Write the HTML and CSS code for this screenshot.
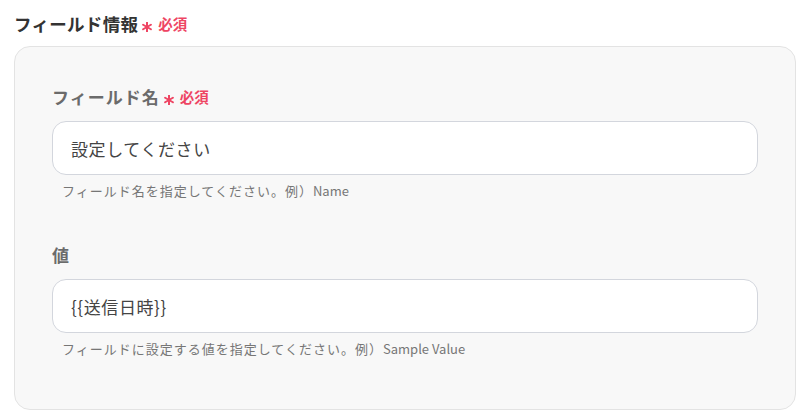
FILE: index.html
```html
<!DOCTYPE html>
<html lang="ja">
<head>
<meta charset="utf-8">
<title>フィールド情報</title>
<link rel="stylesheet" href="styles.css">
</head>
<body>
  <section class="group">
    <h2 class="group-title">フィールド情報<span class="req"><svg class="req-star" viewBox="0 0 10 10" width="10" height="10"><path d="M5 0.5V9.5M1.1 2.75L8.9 7.25M1.1 7.25L8.9 2.75"/></svg><span class="req-text">必須</span></span></h2>
    <div class="card">
      <div class="field">
        <label class="field-label" for="f-name">フィールド名<span class="req"><svg class="req-star" viewBox="0 0 10 10" width="10" height="10"><path d="M5 0.5V9.5M1.1 2.75L8.9 7.25M1.1 7.25L8.9 2.75"/></svg><span class="req-text">必須</span></span></label>
        <input class="field-input" id="f-name" type="text" value="設定してください">
        <p class="field-help">フィールド名を指定してください。例）<span class="latin">Name</span></p>
      </div>
      <div class="field">
        <label class="field-label" for="f-value">値</label>
        <input class="field-input" id="f-value" type="text" value="{{送信日時}}">
        <p class="field-help">フィールドに設定する値を指定してください。例）<span class="latin">Sample Value</span></p>
      </div>
    </div>
  </section>
</body>
</html>
```

FILE: styles.css
```css
html, body {
  margin: 0;
  padding: 0;
  background: #ffffff;
}

body {
  font-family: "Noto Sans CJK JP", "Noto Sans", sans-serif;
  color: #333333;
  padding: 10px 12px 0 14px;
}

.group-title {
  margin: 0 0 8px 0;
  font-size: 17.5px;
  line-height: 28px;
  font-weight: 700;
  letter-spacing: 0.3px;
  color: #333333;
  display: flex;
  align-items: center;
}

.req {
  display: inline-flex;
  align-items: center;
  margin-left: 4px;
  letter-spacing: 0;
}

.req-star {
  fill: none;
  stroke: #ee4563;
  stroke-width: 2;
  stroke-linecap: round;
  margin-top: 6px;
}

.req-text {
  color: #ee4563;
  font-size: 14.5px;
  font-weight: 700;
  margin-left: 6px;
  line-height: 20px;
}

.card {
  background: #f8f8f8;
  border: 1px solid #e3e3e3;
  border-radius: 16px;
  padding: 38px 37px 8px 37px;
}

.field {
  display: flex;
  flex-direction: column;
  padding-bottom: 42px;
}

.field-label {
  font-size: 17px;
  line-height: 24px;
  font-weight: 700;
  letter-spacing: 1px;
  color: #6b6b6b;
  display: flex;
  align-items: center;
  margin-bottom: 12px;
}

.field-input {
  box-sizing: border-box;
  height: 54px;
  width: 100%;
  border: 1px solid #d3d6dd;
  border-radius: 14px;
  background: #ffffff;
  padding: 0 18px;
  font-family: "Noto Sans CJK JP", "Noto Sans", sans-serif;
  font-size: 17px;
  letter-spacing: 0.6px;
  color: #444444;
  outline: none;
}

.field-help {
  margin: 6px 0 0 10px;
  font-size: 13px;
  line-height: 20px;
  letter-spacing: 1px;
  color: #767676;
}

.field-help .latin {
  letter-spacing: 0;
}
```
